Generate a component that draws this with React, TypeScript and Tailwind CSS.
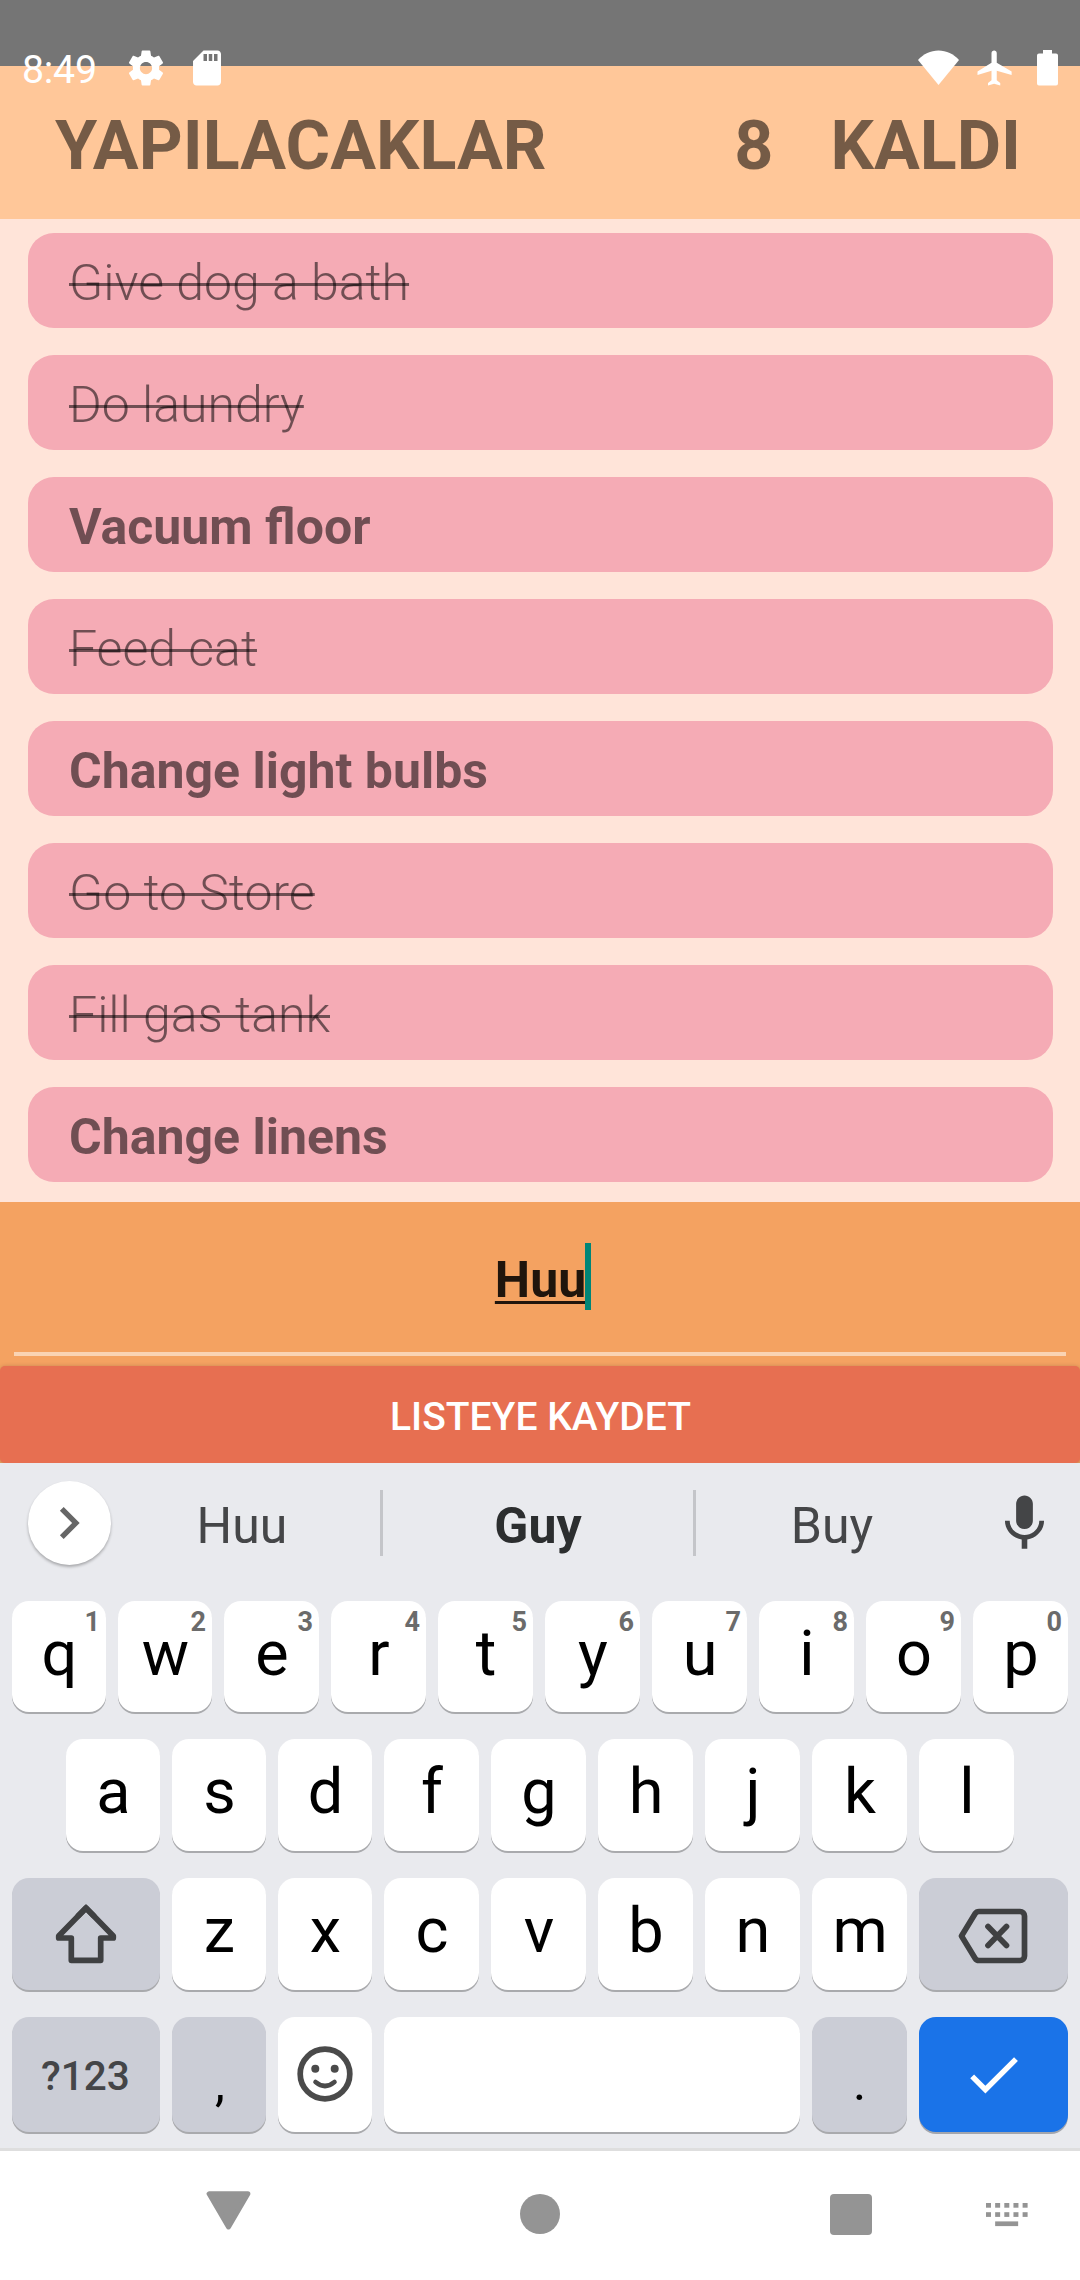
import React from 'react';

type Todo = { title: string; done: boolean };

const TODOS: Todo[] = [
  { title: 'Give dog a bath', done: true },
  { title: 'Do laundry', done: true },
  { title: 'Vacuum floor', done: false },
  { title: 'Feed cat', done: true },
  { title: 'Change light bulbs', done: false },
  { title: 'Go to Store', done: true },
  { title: 'Fill gas tank', done: true },
  { title: 'Change linens', done: false },
];

function StatusBar() {
  return (
    <div className="absolute inset-x-0 top-0 flex h-[135px] items-center text-white">
      <span className="ml-[22px] w-[103px] pt-[5px] text-[39.4px] leading-none tracking-[-0.3px]">8:49</span>
      <svg className="h-[42px] w-[42px]" viewBox="0 0 24 24" fill="currentColor">
        <path d="M19.43 12.98c.04-.32.07-.64.07-.98s-.03-.66-.07-.98l2.11-1.65c.19-.15.24-.42.12-.64l-2-3.46c-.12-.22-.39-.3-.61-.22l-2.49 1c-.52-.4-1.08-.73-1.69-.98l-.38-2.65C14.46 2.18 14.25 2 14 2h-4c-.25 0-.46.18-.49.42l-.38 2.65c-.61.25-1.17.59-1.69.98l-2.49-1c-.23-.09-.49 0-.61.22l-2 3.46c-.13.22-.07.49.12.64l2.11 1.65c-.04.32-.07.65-.07.98s.03.66.07.98l-2.11 1.65c-.19.15-.24.42-.12.64l2 3.46c.12.22.39.3.61.22l2.49-1c.52.4 1.08.73 1.69.98l.38 2.65c.03.24.24.42.49.42h4c.25 0 .46-.18.49-.42l.38-2.65c.61-.25 1.17-.59 1.69-.98l2.49 1c.23.09.49 0 .61-.22l2-3.46c.12-.22.07-.49-.12-.64l-2.11-1.65zM12 15.5c-1.93 0-3.5-1.57-3.5-3.5s1.57-3.5 3.5-3.5 3.5 1.57 3.5 3.5-1.57 3.5-3.5 3.5z" />
      </svg>
      <svg className="ml-[19px] h-[42px] w-[42px]" viewBox="0 0 24 24" fill="currentColor">
        <path d="M18 2h-8L4.02 8 4 20c0 1.1.9 2 2 2h12c1.1 0 2-.9 2-2V4c0-1.1-.9-2-2-2zm-6 6h-2V4h2v4zm3 0h-2V4h2v4zm3 0h-2V4h2v4z" />
      </svg>
      <div className="ml-auto mr-[22px] flex items-center">
        <svg className="h-[36px] w-[41px]" viewBox="0 0 41 36" fill="currentColor">
          <path d="M0 10C5.500 4 12.500 .5 20.500 .5S35.500 4 41 10L20.500 34.900Z" />
        </svg>
        <svg className="ml-[15px] h-[42px] w-[42px]" viewBox="0 0 24 24" fill="currentColor">
          <path d="M21.500 16v-2l-8.500-5V3.500c0-.83-.67-1.500-1.500-1.500S10 2.670 10 3.500V9l-8 5v2l8-2.500V19l-2 1.500V22l3.500-1 3.500 1v-1.500L13 19v-5.500l8.500 2.500z" />
        </svg>
        <svg className="ml-[21px] h-[36px] w-[21px]" viewBox="0 0 21 36" fill="currentColor">
          <path d="M6 0h9v3.500h4a2 2 0 0 1 2 2v28a2 2 0 0 1-2 2H2a2 2 0 0 1-2-2V5.500a2 2 0 0 1 2-2h4z" />
        </svg>
      </div>
    </div>
  );
}

function Header() {
  return (
    <header className="flex h-[153px] items-center bg-[#ffc799] pl-[55px] pr-[59px] pt-[7px] text-[68.25px] font-bold leading-none text-black/54">
      <span>YAPILACAKLAR</span>
      <span className="ml-auto">8</span>
      <span className="ml-[57px]">KALDI</span>
    </header>
  );
}

function TodoRow({ todo }: { todo: Todo }) {
  return (
    <li className="flex h-[95px] items-center rounded-[26px] bg-[#f5abb5] pl-[41px] pt-[4px] text-[50px] leading-none text-black/54">
      {todo.done ? (
        <span className="font-light line-through decoration-[3px]">{todo.title}</span>
      ) : (
        <span className="font-bold">{todo.title}</span>
      )}
    </li>
  );
}

function Key({ label, hint, narrow, raised }: { label: string; hint?: string; narrow?: boolean; raised?: boolean }) {
  return (
    <div
      className={
        (narrow ? 'w-[94px] ' : 'w-[95px] ') +
        (raised ? 'pb-[7px] ' : 'pb-[6px] ') +
        'relative flex shrink-0 items-center justify-center rounded-[17px] bg-white pl-px text-[63px] leading-none text-black shadow-[0_2px_0_#a9aaad]'
      }
    >
      {label}
      {hint && (
        <span className="absolute right-[6px] top-[6px] text-[27px] font-bold leading-[30px] text-[#6b6b6b]">{hint}</span>
      )}
    </div>
  );
}

function Suggestions() {
  return (
    <div className="flex h-[138px] items-start">
      <div className="ml-[28px] mt-[18px] flex h-[84px] w-[83px] items-center justify-center rounded-full bg-white pr-[2px] shadow-[0_2px_3px_rgba(0,0,0,0.28)]">
        <svg className="h-[64px] w-[64px]" viewBox="0 0 24 24" fill="#666">
          <path d="M10 6L8.590 7.410 13.170 12l-4.580 4.590L10 18l6-6z" />
        </svg>
      </div>
      <div className="flex h-[120px] w-[269px] items-center justify-center pr-[7px] pt-[6px] text-[50px] leading-none text-[#454648]">Huu</div>
      <div className="mt-[27px] h-[66px] w-[3px] bg-[#c4c5c9]" />
      <div className="flex h-[120px] w-[310px] items-center justify-center pt-[6px] text-[50px] font-bold leading-none text-[#2c2e2f]">Guy</div>
      <div className="mt-[27px] h-[66px] w-[3px] bg-[#c4c5c9]" />
      <div className="flex h-[120px] w-[274px] items-center justify-center pr-[2px] pt-[6px] text-[50px] leading-none text-[#454648]">Buy</div>
      <svg className="ml-[20.500px] mt-[27px] h-[67px] w-[67px]" viewBox="0 0 24 24" fill="#444547">
        <path d="M12 14c1.660 0 2.990-1.340 2.990-3L15 5c0-1.660-1.340-3-3-3S9 3.340 9 5v6c0 1.660 1.340 3 3 3zm5.300-3c0 3-2.540 5.100-5.300 5.100S6.700 14 6.700 11H5c0 3.410 2.720 6.230 6 6.720V21h2v-3.280c3.280-.48 6-3.300 6-6.720h-1.700z" />
      </svg>
    </div>
  );
}

function Keyboard() {
  return (
    <section className="flex h-[685px] flex-col bg-[#e9eaee]">
      <Suggestions />
      <div className="flex h-[111px] gap-[12px] px-[12px]">
        {'qwertyuiop'.split('').map((c, i) => (
          <Key key={c} label={c} hint={String((i + 1) % 10)} narrow={i < 2} />
        ))}
      </div>
      <div className="mt-[27px] flex h-[112px] gap-[12px] px-[66px]">
        {'asdfghjkl'.split('').map((c, i) => (
          <Key key={c} label={c} narrow={i < 3} raised />
        ))}
      </div>
      <div className="mt-[27px] flex h-[112px] gap-[12px] px-[12px]">
        <div className="flex w-[148px] items-center justify-center rounded-[17px] bg-[#cbcdd6] pb-px pr-px shadow-[0_2px_0_#a9aaad]">
          <svg className="h-[62px] w-[64px]" viewBox="0 0 64 62" fill="none" stroke="#3f4042" strokeWidth="5.700" strokeLinejoin="round">
            <path strokeLinejoin="miter" d="M23.500 13.500L32 5L40.500 13.500" />
            <path d="M32 5L4.700 33V35H17.300V57.300H46.700V35H59.300V33Z" />
          </svg>
        </div>
        {'zxcvbnm'.split('').map((c, i) => (
          <Key key={c} label={c} narrow={i < 2} raised />
        ))}
        <div className="flex w-[149px] items-center justify-center rounded-[17px] bg-[#cbcdd6] pr-[2px] pt-[4px] shadow-[0_2px_0_#a9aaad]">
          <svg className="h-[56px] w-[70px]" viewBox="0 0 70 56" fill="none" stroke="#3f4042" strokeWidth="5.700" strokeLinejoin="round" strokeLinecap="round">
            <path d="M21 3.500H62A4.500 4.500 0 0 1 66.500 8V48A4.500 4.500 0 0 1 62 52.500H21Q18.500 52.500 17.200 50.400L3.500 28L17.200 5.600Q18.500 3.500 21 3.500Z" />
            <path d="M30 18.500L48.500 37.500M48.500 18.500L30 37.500" />
          </svg>
        </div>
      </div>
      <div className="mt-[27px] flex h-[115px] gap-[12px] px-[12px]">
        <div className="flex w-[148px] items-center justify-center rounded-[17px] bg-[#cbcdd6] pr-[1px] pt-[3px] text-[40.5px] font-medium leading-none text-[#444548] shadow-[0_2px_0_#a9aaad]">?123</div>
        <div className="flex w-[94px] items-center justify-center rounded-[17px] bg-[#cbcdd6] pl-[2px] pt-[17px] text-[50px] leading-none text-black shadow-[0_2px_0_#a9aaad]">,</div>
        <div className="flex w-[94px] items-center justify-center rounded-[17px] bg-white pb-[1px] shadow-[0_2px_0_#a9aaad]">
          <svg className="h-[56px] w-[56px]" viewBox="0 0 56 56" fill="none" stroke="#4a4a4a">
            <circle cx="28" cy="28" r="24.800" strokeWidth="5.700" />
            <circle cx="18.300" cy="22.800" r="4" fill="#4a4a4a" stroke="none" />
            <circle cx="37.700" cy="22.800" r="4" fill="#4a4a4a" stroke="none" />
            <path d="M18.500 36Q28 44 37.500 36" strokeWidth="4.600" strokeLinecap="round" />
          </svg>
        </div>
        <div className="flex-1 rounded-[17px] bg-white shadow-[0_2px_0_#a9aaad]" />
        <div className="flex w-[95px] items-center justify-center rounded-[17px] bg-[#cbcdd6] pt-[17px] text-[50px] leading-none text-black shadow-[0_2px_0_#a9aaad]">.</div>
        <div className="flex w-[149px] items-center justify-center rounded-[17px] bg-[#1a73e8] pr-[1px] shadow-[0_2px_0_#a3a6ad]">
          <svg className="h-[65px] w-[65px]" viewBox="0 0 24 24" fill="#fff">
            <path d="M9 16.170L4.830 12l-1.420 1.410L9 19 21 7l-1.410-1.410z" />
          </svg>
        </div>
      </div>
    </section>
  );
}

function NavBar() {
  return (
    <nav className="flex h-[132px] items-start border-t-[3px] border-[#dedede] bg-white">
      <svg className="ml-[206px] mt-[40px] h-[39px] w-[45px]" viewBox="0 0 45 39" fill="#949494" stroke="#949494" strokeWidth="5" strokeLinejoin="round">
        <path d="M3.100 2.800H41.900L22.500 36Z" />
      </svg>
      <div className="ml-[269px] mt-[43px] h-[40px] w-[40px] rounded-full bg-[#949494]" />
      <div className="ml-[270px] mt-[43px] h-[41px] w-[41.500px] rounded-[4px] bg-[#949494]" />
      <svg className="ml-[114px] mt-[52px] h-[24px] w-[43px]" viewBox="0 0 43 24" fill="#949494">
        {[0, 1, 2, 3, 4].map((i) => (
          <g key={i}>
            <rect x={i * 9.15} y="0" width="5" height="4.700" />
            <rect x={i * 9.15} y="9.200" width="5" height="4.700" />
          </g>
        ))}
        <rect x="9.150" y="18.400" width="23" height="4.700" />
      </svg>
    </nav>
  );
}

export default function App() {
  return (
    <main className="relative flex h-[2280px] w-[1080px] flex-col overflow-hidden bg-[#ffe4d9] font-['Roboto',sans-serif]">
      <div className="h-[66px] bg-[#757575]" />
      <Header />
      <ul className="flex h-[983px] flex-col gap-[27px] pl-[28px] pr-[27px] pt-[14px]">
        {TODOS.map((t) => (
          <TodoRow key={t.title} todo={t} />
        ))}
      </ul>
      <div className="flex h-[261px] flex-col bg-[#f4a261]">
        <div className="flex h-[164px] flex-col px-[14px]">
          <div className="flex h-[150px] items-center justify-center">
            <span className="pt-[6px] text-[50px] font-bold leading-none text-black/87 underline decoration-[2.500px] underline-offset-[4px]">Huu</span>
            <span className="-ml-px -mr-[6px] mb-px h-[67px] w-[6px] bg-[#008577]" />
          </div>
          <div className="h-[4px] bg-[#fad3b3]" />
        </div>
        <button className="h-[97px] w-full rounded-[5px] bg-[#e76f51] pl-px pt-[5px] text-[39px] font-medium leading-none text-white shadow-[0_1px_5px_rgba(0,0,0,0.25)]">
          LISTEYE KAYDET
        </button>
      </div>
      <Keyboard />
      <NavBar />
      <StatusBar />
    </main>
  );
}
